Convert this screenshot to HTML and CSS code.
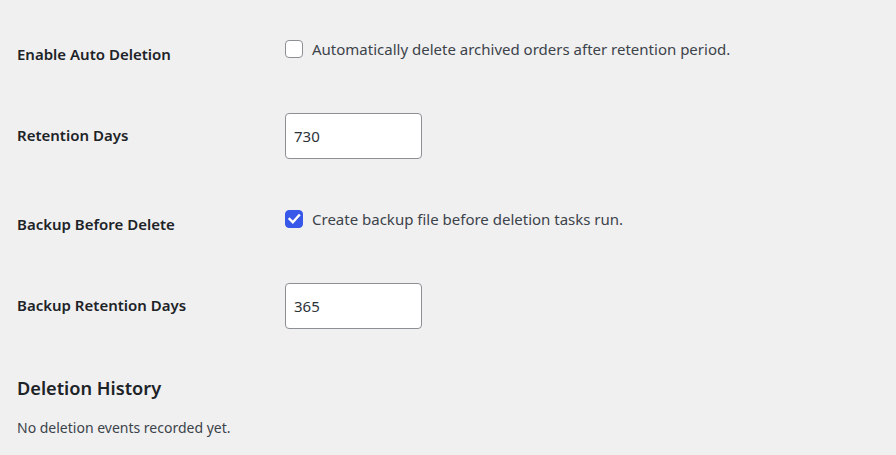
FILE: index.html
```html
<!DOCTYPE html>
<html lang="en">
<head>
<meta charset="utf-8">
<title>Settings</title>
<link rel="stylesheet" href="styles.css">
</head>
<body>
<div class="wrap">
  <div class="form-table">
    <div class="row row-check">
      <div class="th">Enable Auto Deletion</div>
      <div class="td">
        <label class="check-label"><span class="checkbox"></span><span>Automatically delete archived orders after retention period.</span></label>
      </div>
    </div>
    <div class="row row-input">
      <div class="th">Retention Days</div>
      <div class="td"><div class="num-input">730</div></div>
    </div>
    <div class="row row-check">
      <div class="th">Backup Before Delete</div>
      <div class="td">
        <label class="check-label"><span class="checkbox checked"><svg width="18" height="18" viewBox="0 0 18 18"><polyline points="4.6,9 7.8,12.2 14,5.4" fill="none" stroke="#fff" stroke-width="2.4" stroke-linecap="square"/></svg></span><span>Create backup file before deletion tasks run.</span></label>
      </div>
    </div>
    <div class="row row-input">
      <div class="th">Backup Retention Days</div>
      <div class="td"><div class="num-input">365</div></div>
    </div>
  </div>
  <h2 class="section-title">Deletion History</h2>
  <p class="empty">No deletion events recorded yet.</p>
</div>
</body>
</html>
```
FILE: styles.css
```css
html, body {
  margin: 0;
  padding: 0;
  background: #f0f0f1;
}
body {
  font-family: "Noto Sans", "Open Sans", sans-serif;
  font-size: 15px;
  color: #3c434a;
}
.wrap {
  padding: 4px 17px 0;
}
.row {
  display: grid;
  grid-template-columns: 268px 1fr;
  align-items: start;
}
.th {
  font-weight: 600;
  color: #1d2327;
  line-height: 20px;
}
.row-check .th { padding-top: 40px; }
.row-check .td { padding: 36px 0 40px; }
.row-input .th { padding-top: 27px; }
.row-input .td { padding: 15px 0; }
.check-label {
  display: flex;
  align-items: center;
  gap: 9px;
  line-height: 20px;
  height: 18px;
}
.checkbox {
  box-sizing: border-box;
  width: 18px;
  height: 18px;
  border: 1px solid #8c8f94;
  border-radius: 4px;
  background: #fff;
  display: block;
  flex: none;
}
.checkbox.checked {
  background: #3858e9;
  border-color: #3858e9;
  position: relative;
}
.checkbox.checked svg {
  position: absolute;
  left: -1px;
  top: -1px;
}
.num-input {
  box-sizing: border-box;
  width: 137px;
  height: 46px;
  border: 1px solid #8c8f94;
  border-radius: 4px;
  background: #fff;
  padding: 0 8px;
  display: flex;
  align-items: center;
  color: #2c3338;
}
.section-title {
  margin: 33px 0 0;
  font-size: 18.2px;
  line-height: 1.3;
  font-weight: 600;
  color: #1d2327;
}
.empty {
  margin: 16px 0 0;
  font-size: 14px;
  line-height: 1.5;
  color: #3c434a;
}
```
